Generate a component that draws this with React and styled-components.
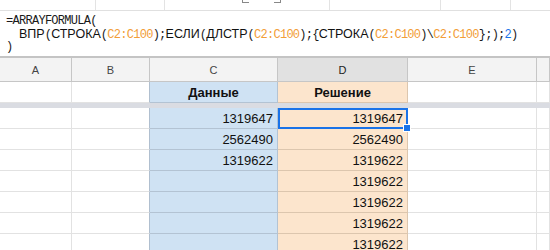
import styled, { createGlobalStyle } from 'styled-components';

const Global = createGlobalStyle`
  html, body { margin: 0; padding: 0; background: #fff; }
  body { width: 550px; height: 250px; overflow: hidden; }
`

const Page = styled.div`
  width: 550px;
  height: 250px;
  overflow: hidden;
  display: flex;
  flex-direction: column;
  font-family: "Liberation Sans", Arial, sans-serif;
`
const TopStrip = styled.div`
  height: 10px;
  flex: none;
  display: grid;
  grid-template-columns: 96px 69px 165px 111px 70px 1fr;
  border-bottom: 1px solid #e0e0e0;
  position: relative;
`
const StripCell = styled.div`
  border-right: ${p => p.last ? 'none' : '1px solid #e3e3e3'};
`
const StripMark = styled.span`
  position: absolute;
  top: 0;
  left: ${p => p.x}px;
  width: 6px;
  height: 2px;
  border-bottom: 1px solid #888;
  border-${p => p.side}: 1px solid #888;
`
const FormulaBar = styled.div`
  height: 47px;
  flex: none;
  display: flex;
  flex-direction: column;
  padding: 4px 0 0 6px;
  box-sizing: border-box;
  border-bottom: 2px solid #c4c4c4;
`
const FormulaLine = styled.div`
  height: 13px;
  line-height: 13px;
  font-size: 12px;
  white-space: pre;
  display: flex;
  align-items: baseline;
`
const Mono = styled.span`
  font-family: "Liberation Mono", "Courier New", monospace;
  font-size: 12px;
  letter-spacing: -0.72px;
  color: ${p => p.color || '#1a1a1a'};
`
const Cyr = styled.span`
  font-family: "Liberation Sans", Arial, sans-serif;
  font-size: 12.5px;
  color: #111;
`
const Grid = styled.div`
  display: grid;
  grid-template-columns: 72px 78px 128px 130px 129px 1fr;
  flex: none;
`
const ColHead = styled.div`
  height: 23px;
  box-sizing: content-box;
  display: flex;
  align-items: center;
  justify-content: center;
  font-size: 11px;
  color: ${p => p.active ? '#222' : '#444'};
  background: ${p => p.active ? '#e1e1e1' : '#f3f3f3'};
  border-right: 1px solid #c6c6c6;
  border-bottom: 1px solid #c6c6c6;
`
const tones = {
  plain: { bg: '#fff', line: '#e2e2e2' },
  blue: { bg: '#cfe2f3', line: '#b3c3d3' },
  peach: { bg: '#fce5cd', line: '#dcc6ae' },
}
const Cell = styled.div`
  position: relative;
  height: 20px;
  box-sizing: content-box;
  display: flex;
  align-items: center;
  justify-content: ${p => p.center ? 'center' : 'flex-end'};
  padding: 0 4px;
  font-size: 13px;
  font-weight: ${p => p.bold ? 700 : 400};
  color: #111;
  background: ${p => tones[p.tone || 'plain'].bg};
  border-right: 1px solid ${p => p.leftOfBlue ? '#b0bfcf' : tones[p.tone || 'plain'].line};
  border-bottom: 1px solid ${p => tones[p.tone || 'plain'].line};
  ${p => p.selected && `
    outline: 2px solid #1a73e8;
    outline-offset: -2px;
    z-index: 2;
    &::after {
      content: '';
      position: absolute;
      right: -4px;
      bottom: -4px;
      width: 6px;
      height: 6px;
      background: #1a73e8;
      border: 1px solid #fff;
    }
  `}
`
const Freeze = styled.div`
  grid-column: 1 / -1;
  height: 5px;
  background: #dadce2;
`

// split a formula piece into latin (mono) and cyrillic runs
function FormulaText({ text, color }) {
  return text.split(/([А-яЁё]+)/).filter(Boolean).map((part, i) =>
    /[А-яЁё]/.test(part)
      ? <Cyr key={i}>{part}</Cyr>
      : <Mono key={i} color={color}>{part}</Mono>
  )
}

const cols = ['A', 'B', 'C', 'D', 'E', '']
const cData = ['1319647', '2562490', '1319622', '', '', '', '']
const dData = ['1319647', '2562490', '1319622', '1319622', '1319622', '1319622', '1319622']

export default function App() {
  const range = <Mono color="#f29d38">C2:C100</Mono>
  return (
    <Page>
      <Global />
      <TopStrip>
        <StripCell /><StripCell /><StripCell /><StripCell /><StripCell /><StripCell last />
        <StripMark x={242} side="left" />
        <StripMark x={274} side="right" />
      </TopStrip>
      <FormulaBar>
        <FormulaLine><Mono>=ARRAYFORMULA(</Mono></FormulaLine>
        <FormulaLine>
          <FormulaText text="  ВПР(СТРОКА(" />{range}
          <FormulaText text=");ЕСЛИ(ДЛСТР(" />{range}
          <FormulaText text=");{СТРОКА(" />{range}
          <Mono>{')\\'}</Mono>{range}
          <Mono>{'};);'}</Mono><Mono color="#1a73e8">2</Mono><Mono>)</Mono>
        </FormulaLine>
        <FormulaLine><Mono>)</Mono></FormulaLine>
      </FormulaBar>
      <Grid>
        {cols.map((c, i) => (
          <ColHead key={i} active={c === 'D'}>{c}</ColHead>
        ))}
        <Cell /><Cell leftOfBlue />
        <Cell tone="blue" center bold>Данные</Cell>
        <Cell tone="peach" center bold>Решение</Cell>
        <Cell /><Cell />
        <Freeze />
        {dData.map((d, i) => (
          [
            <Cell key={'a' + i} />,
            <Cell key={'b' + i} leftOfBlue />,
            <Cell key={'c' + i} tone="blue">{cData[i]}</Cell>,
            <Cell key={'d' + i} tone="peach" selected={i === 0}>{d}</Cell>,
            <Cell key={'e' + i} />,
            <Cell key={'f' + i} />,
          ]
        ))}
      </Grid>
    </Page>
  )
}
